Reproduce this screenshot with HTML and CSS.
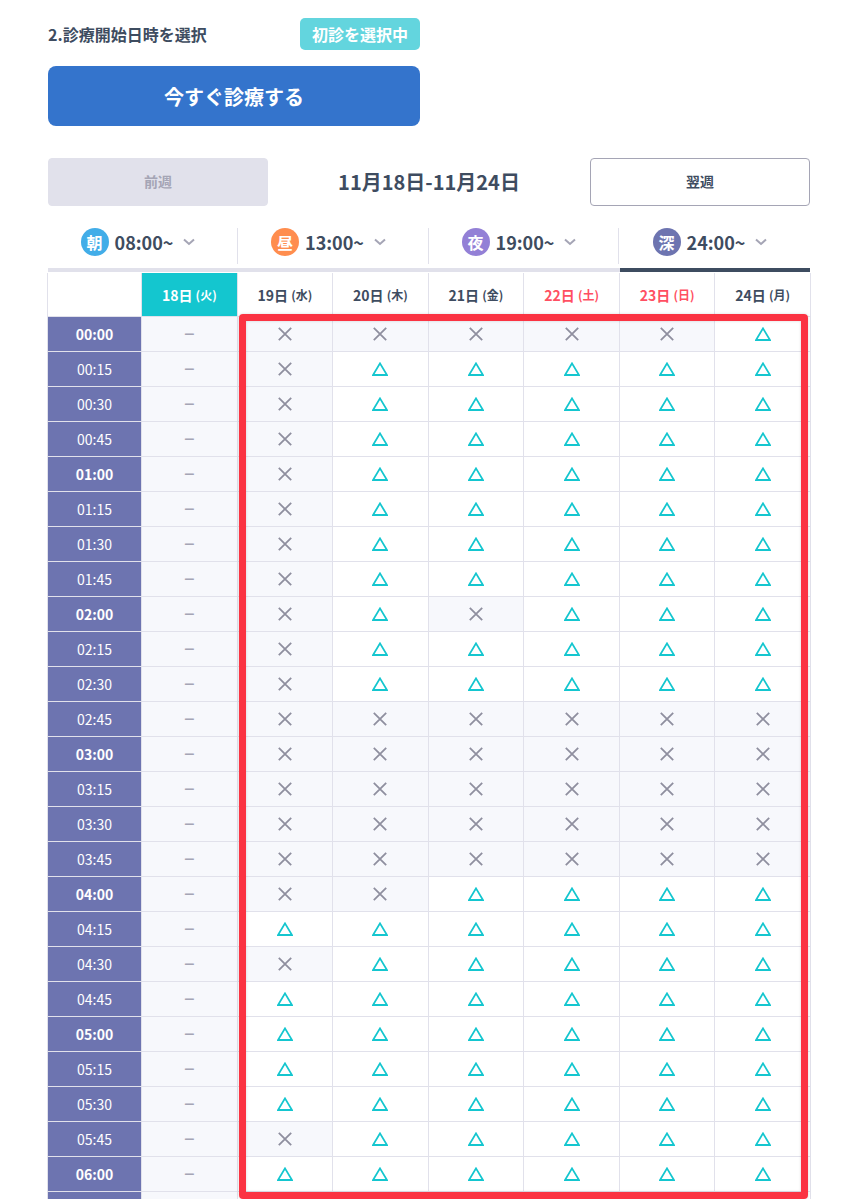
FILE: index.html
```html
<!DOCTYPE html>
<html lang="ja">
<head>
    <meta charset="UTF-8">
    <meta name="viewport" content="width=device-width, initial-scale=1.0">
    <title>診療開始日時を選択</title>
    <link rel="stylesheet" href="styles.css">
</head>
<body>
    <svg class="defs" width="0" height="0">
        <symbol id="mark-x" viewBox="0 0 14 14"><path d="M.8.8l12.4 12.4M13.2.8L.8 13.2" fill="none" stroke="#8f8f9f" stroke-width="1.8"/></symbol>
        <symbol id="mark-t" viewBox="0 0 16 14"><path d="M8 1.4L15 13H1z" fill="none" stroke="#14c6cf" stroke-width="1.8"/></symbol>
        <symbol id="chevron" viewBox="0 0 12 8"><path d="M1 1.5l5 4.5 5-4.5" fill="none" stroke="#a5a5b5" stroke-width="2"/></symbol>
    </svg>

    <main class="page">
        <div class="title-row">
            <h2 class="title">2.診療開始日時を選択</h2>
            <span class="badge">初診を選択中</span>
        </div>
        <button class="now-btn" type="button">今すぐ診療する</button>

        <div class="week-nav">
            <button class="week-btn disabled" type="button">前週</button>
            <div class="week-range">11月18日-11月24日</div>
            <button class="week-btn" type="button">翌週</button>
        </div>

        <div class="tabs">
            <div class="tab"><span class="dot morning">朝</span><span class="tab-time">08:00~</span><svg class="chev"><use href="#chevron"/></svg></div>
            <div class="tab"><span class="dot noon">昼</span><span class="tab-time">13:00~</span><svg class="chev"><use href="#chevron"/></svg></div>
            <div class="tab"><span class="dot night">夜</span><span class="tab-time">19:00~</span><svg class="chev"><use href="#chevron"/></svg></div>
            <div class="tab"><span class="dot late">深</span><span class="tab-time">24:00~</span><svg class="chev"><use href="#chevron"/></svg></div>
        </div>
        <div class="tab-bar"><div class="tab-bar-active"></div></div>

        <div class="slots" id="slots">
            <div class="head"></div>
            <div class="head today">18日 <small>(火)</small></div>
            <div class="head">19日 <small>(水)</small></div>
            <div class="head">20日 <small>(木)</small></div>
            <div class="head">21日 <small>(金)</small></div>
            <div class="head holiday">22日 <small>(土)</small></div>
            <div class="head holiday">23日 <small>(日)</small></div>
            <div class="head">24日 <small>(月)</small></div>
        </div>

        <div class="highlight"></div>
    </main>

    <script src="grid.js"></script>
</body>
</html>
```

FILE: styles.css
```css
html, body {
    margin: 0;
    padding: 0;
    height: 100%;
    overflow: hidden;
}
body {
    font-family: "Noto Sans CJK JP", "Noto Sans", sans-serif;
    background-color: white;
    color: #3e4c60;
}
.defs {
    position: absolute;
}
.page {
    position: relative;
    padding: 18px 43px 0 48px;
}
.title-row {
    display: flex;
    justify-content: space-between;
    align-items: center;
    width: 372px;
    height: 32px;
}
.title {
    margin: 0;
    font-size: 16px;
    font-weight: 700;
}
.badge {
    width: 120px;
    height: 32px;
    line-height: 32px;
    text-align: center;
    background-color: #63d5de;
    color: white;
    font-size: 16px;
    font-weight: 700;
    border-radius: 5px;
}
.now-btn {
    display: block;
    width: 372px;
    height: 60px;
    margin-top: 16px;
    padding: 0;
    border: 0;
    border-radius: 8px;
    background-color: #3474cc;
    color: white;
    font-family: inherit;
    font-size: 20px;
    font-weight: 700;
}
.week-nav {
    display: flex;
    align-items: center;
    justify-content: space-between;
    margin-top: 32px;
}
.week-btn {
    width: 220px;
    height: 48px;
    padding: 0 0 2px;
    background-color: white;
    border: 1px solid #a5a5b5;
    border-radius: 4px;
    color: #3e4c60;
    font-family: inherit;
    font-size: 14px;
    font-weight: 700;
}
.week-btn.disabled {
    background-color: #e1e1eb;
    border-color: #e1e1eb;
    color: #a5a5b5;
}
.week-range {
    font-size: 20px;
    font-weight: 700;
    padding-bottom: 2px;
}
.tabs {
    display: grid;
    grid-template-columns: 190px 191px 190px 191px;
    margin-top: 22px;
    height: 36px;
}
.tab {
    display: flex;
    align-items: center;
    justify-content: center;
    padding: 0 9px 8px 0;
    border-right: 1px solid #e1e1eb;
    box-sizing: border-box;
}
.tab:last-child {
    border-right: 0;
}
.dot {
    width: 28px;
    height: 28px;
    line-height: 28px;
    margin-right: 6px;
    border-radius: 50%;
    text-align: center;
    color: white;
    font-size: 16px;
    font-weight: 700;
}
.morning { background-color: #42ade8; }
.noon { background-color: #ff8d4e; }
.night { background-color: #9380d6; }
.late { background-color: #6d74b0; }
.tab-time {
    font-size: 18px;
    font-weight: 700;
}
.chev {
    width: 12px;
    height: 8px;
    margin-left: 10px;
}
.tab-bar {
    height: 4px;
    margin-top: 4px;
    background-color: #e1e1eb;
}
.tab-bar-active {
    width: 190px;
    height: 4px;
    margin-left: auto;
    background-color: #3e4c60;
}
.slots {
    display: grid;
    grid-template-columns: 94px repeat(7, 1fr);
    grid-template-rows: 44px;
    grid-auto-rows: 35px;
    margin: 1px -1px 0;
    border-left: 1px solid #e1e1eb;
}
.slots > div {
    display: flex;
    align-items: center;
    justify-content: center;
    box-sizing: border-box;
    border-right: 1px solid #e1e1eb;
    border-bottom: 1px solid #e1e1eb;
}
.slots > .head {
    font-size: 14px;
    font-weight: 700;
    white-space: pre;
}
.head small {
    font-size: 12px;
}
.slots > .today {
    background-color: #14c6cf;
    color: white;
}
.slots > .holiday {
    color: #ff4f62;
}
.slots > .time {
    background-color: #6d74b0;
    color: white;
    font-size: 14px;
}
.slots > .time.hour {
    font-weight: 700;
}
.slots > .off {
    background-color: #f7f8fc;
}
.slots > .none {
    background-color: #f7f8fc;
    color: #a5a5b5;
    font-size: 18px;
    font-weight: 500;
    padding-bottom: 3px;
}
.mark {
    width: 14px;
    height: 14px;
    margin-bottom: 1px;
}
.mark.t {
    width: 16px;
}
.highlight {
    position: absolute;
    left: 239px;
    top: 314px;
    width: 569px;
    height: 885px;
    box-sizing: border-box;
    border: 7px solid #fb3342;
    border-radius: 4px;
    box-shadow: 0 0 3px rgba(0, 0, 0, 0.15), inset 0 0 3px rgba(0, 0, 0, 0.15);
}
```

FILE: grid.js
```js
// x = full, t = few left, one letter per day from 19th to 24th
const rows = [
    ['00:00', 'xxxxxt'], ['00:15', 'xttttt'], ['00:30', 'xttttt'], ['00:45', 'xttttt'],
    ['01:00', 'xttttt'], ['01:15', 'xttttt'], ['01:30', 'xttttt'], ['01:45', 'xttttt'],
    ['02:00', 'xtxttt'], ['02:15', 'xttttt'], ['02:30', 'xttttt'], ['02:45', 'xxxxxx'],
    ['03:00', 'xxxxxx'], ['03:15', 'xxxxxx'], ['03:30', 'xxxxxx'], ['03:45', 'xxxxxx'],
    ['04:00', 'xxtttt'], ['04:15', 'tttttt'], ['04:30', 'xttttt'], ['04:45', 'tttttt'],
    ['05:00', 'tttttt'], ['05:15', 'tttttt'], ['05:30', 'tttttt'], ['05:45', 'xttttt'],
    ['06:00', 'tttttt'],
];

const slots = document.getElementById('slots');

function addCell(className, html) {
    const cell = document.createElement('div');
    cell.className = className;
    cell.innerHTML = html;
    slots.appendChild(cell);
}

rows.forEach(function(row) {
    const hour = row[0].endsWith(':00') ? ' hour' : '';
    addCell('time' + hour, row[0]);
    addCell('none', '−');
    row[1].split('').forEach(function(mark) {
        addCell(mark === 'x' ? 'off' : 'open', '<svg class="mark ' + mark + '"><use href="#mark-' + mark + '"/></svg>');
    });
});

// next row only peeks in at the bottom of the window
addCell('time', '');
addCell('none', '');
for (let i = 0; i < 6; i++) {
    addCell('open', '');
}
```
